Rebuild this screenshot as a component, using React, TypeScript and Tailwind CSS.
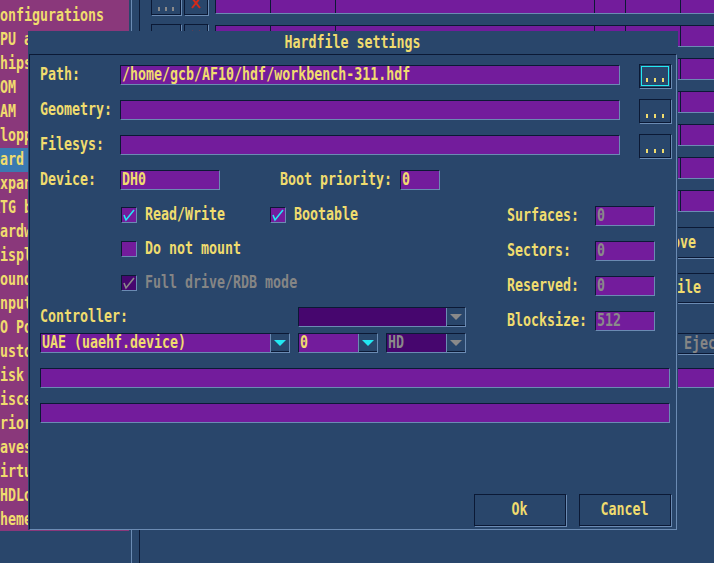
import type { ReactNode } from "react";

const sidebarItems = [
  "Configurations",
  "CPU and FPU",
  "Chipset",
  "ROM",
  "RAM",
  "Floppy drives",
  "Hard drives/CD",
  "Expansions",
  "RTG board",
  "Hardware info",
  "Display",
  "Sound",
  "Input",
  "IO Ports",
  "Custom controls",
  "Disk swapper",
  "Miscellaneous",
  "Priority",
  "Savestates",
  "Virtual Keyboard",
  "WHDLoad",
  "Themes",
];

// inset field: dark top/left, light bottom/right
const inset =
  "border border-t-[#0b1935] border-l-[#0b1935] border-r-[#6b8bb3] border-b-[#6b8bb3]";
const raised = "border border-[#0b1935] shadow-[1px_1px_0_#6b8bb3]";

function T({
  children,
  className = "",
  center = false,
}: {
  children: ReactNode;
  className?: string;
  center?: boolean;
}) {
  return (
    <span
      className={`inline-block whitespace-nowrap text-[17.5px] leading-none font-bold scale-x-[0.76] ${
        center ? "origin-center" : "origin-left"
      } ${className}`}
    >
      {children}
    </span>
  );
}

function Field({
  w,
  value,
  gray = false,
}: {
  w: string;
  value?: string;
  gray?: boolean;
}) {
  return (
    <div className={`${w} h-[20px] ${inset} flex items-center overflow-hidden bg-[#731c9c] pl-px`}>
      {value && <T className={gray ? "text-[#8a8a8a]" : "text-[#f0dc6e]"}>{value}</T>}
    </div>
  );
}

function Arrow({ gray = false }: { gray?: boolean }) {
  return (
    <div className="flex h-full w-[19px] items-center justify-center border-l border-[#6b8bb3] bg-[#29466b] shadow-[inset_0_-1px_0_#0b1935]">
      <svg width="12" height="6" viewBox="0 0 12 6">
        <polygon points="0,0 12,0 6,6" fill={gray ? "#8a8a8a" : "#22e8f2"} />
      </svg>
    </div>
  );
}

function Dropdown({
  w,
  value,
  disabled = false,
}: {
  w: string;
  value?: string;
  disabled?: boolean;
}) {
  return (
    <div className={`${w} h-[20px] ${inset} flex`}>
      <div
        className={`flex flex-1 items-center overflow-hidden pl-px ${
          disabled ? "bg-[#46066e]" : "bg-[#731c9c]"
        }`}
      >
        {value && (
          <T className={disabled ? "text-[#8a8a8a]" : "text-[#f0dc6e]"}>{value}</T>
        )}
      </div>
      <Arrow gray={disabled} />
    </div>
  );
}

function Check({
  label,
  checked = false,
  disabled = false,
  w = "",
}: {
  label: string;
  checked?: boolean;
  disabled?: boolean;
  w?: string;
}) {
  return (
    <div className={`flex h-[16px] items-center ${w}`}>
      <div
        className={`h-[16px] w-[16px] shrink-0 ${inset} ${
          disabled ? "bg-[#46066e]" : "bg-[#731c9c]"
        }`}
      >
        {checked && (
          <svg width="14" height="14" viewBox="0 0 14 14">
            <polyline
              points="2,7 4,12 12,2"
              fill="none"
              stroke={disabled ? "#8a8a8a" : "#22e8f2"}
              strokeWidth="1.6"
            />
          </svg>
        )}
      </div>
      <div className="ml-[8px] w-0">
        <T className={disabled ? "text-[#858585]" : "text-[#f0dc6e]"}>{label}</T>
      </div>
    </div>
  );
}

function DotsButton({ focused = false }: { focused?: boolean }) {
  return (
    <div className={`h-[24px] w-[32px] ${raised} bg-[#29466b] p-px`}>
      <div
        className={`flex h-full w-full items-end justify-center gap-[6px] pb-[3px] ${
          focused ? "border border-[#22e8f2]" : ""
        }`}
      >
        <span className="h-[4px] w-[2px] bg-[#f0dc6e]" />
        <span className="h-[4px] w-[2px] bg-[#f0dc6e]" />
        <span className="h-[4px] w-[2px] bg-[#f0dc6e]" />
      </div>
    </div>
  );
}

function Label({ w, text }: { w: string; text: string }) {
  return (
    <div className={`${w} flex h-[20px] items-center`}>
      <T className="text-[#f0dc6e]">{text}</T>
    </div>
  );
}

function Button({ text }: { text: string }) {
  return (
    <div className={`flex h-[32px] w-[92px] items-center justify-center ${raised} bg-[#29466b]`}>
      <T center className="text-[#f0dc6e]">
        {text}
      </T>
    </div>
  );
}

function ListRow() {
  return (
    <div className="flex h-[24px] shrink-0 items-start">
      <div className={`flex h-[24px] w-[30px] shrink-0 items-end justify-center gap-[5px] pb-[3px] ${raised} bg-[#29466b]`}>
        <span className="h-[4px] w-[2px] bg-[#8a8a8a]" />
        <span className="h-[4px] w-[2px] bg-[#8a8a8a]" />
        <span className="h-[4px] w-[2px] bg-[#8a8a8a]" />
      </div>
      <div className={`ml-[3px] flex h-[24px] w-[24px] shrink-0 items-center justify-center ${raised} bg-[#29466b]`}>
        <svg width="12" height="14" viewBox="0 0 12 14">
          <path d="M2 2 L10 12 M10 2 L2 12" stroke="#d42a1a" strokeWidth="2" />
        </svg>
      </div>
      <div className={`ml-[7px] mt-px flex h-[22px] shrink-0 ${inset} bg-[#731c9c]`}>
        <div className="w-[55px] border-r border-[#0b1935]" />
        <div className="w-[65px] border-r border-[#0b1935]" />
        <div className="w-[259px] border-r border-[#0b1935]" />
        <div className="w-[31px] border-r border-[#0b1935]" />
        <div className="w-[55px] border-r border-[#0b1935]" />
        <div className="w-[80px]" />
      </div>
    </div>
  );
}

function SideButton({
  text,
  h,
  pad,
  gray = false,
}: {
  text: string;
  h: string;
  pad: string;
  gray?: boolean;
}) {
  return (
    <div className={`ml-[449px] flex ${h} w-[150px] shrink-0 items-center ${pad} ${raised} bg-[#29466b]`}>
      <T className={gray ? "text-[#858585]" : "text-[#f0dc6e]"}>{text}</T>
    </div>
  );
}

export default function App() {
  return (
    <div className="relative h-[563px] w-[714px] overflow-hidden bg-[#29466b] font-['DejaVu_Sans_Mono',monospace]">
      {/* main window behind the dialog */}
      <div className="flex h-full">
        <aside className="h-[531px] w-[129px] shrink-0 overflow-hidden bg-[#8a387b] pt-[4px]">
          {sidebarItems.map((item) => (
            <div
              key={item}
              className={`flex h-[24px] items-center ${
                item === "Hard drives/CD" ? "bg-[#3b79b1]" : ""
              }`}
            >
              <div className="-ml-[8px]">
                <T className="text-[#f0dc6e]">{item}</T>
              </div>
            </div>
          ))}
        </aside>

        <main className="ml-[2px] min-w-0 flex-1 border-l border-[#6b8bb3] pl-[7px]">
          <div className="flex h-full flex-col overflow-hidden border-l border-[#0b1935] pl-[11px]">
            <div className="-mt-[9px] flex flex-col gap-[9px]">
              <ListRow />
              <ListRow />
              <ListRow />
              <ListRow />
              <ListRow />
              <ListRow />
              <ListRow />
            </div>
            <div className="mt-[14px] flex">
              <SideButton text="Remove" h="h-[31px]" pad="pl-[47px]" />
            </div>
            <div className="mt-[15px] flex">
              <SideButton text="Add Hardfile" h="h-[30px]" pad="pl-[4px]" />
            </div>
            <div className="mt-[30px] flex">
              <SideButton text="Eject" h="h-[21px]" pad="pl-[83px]" gray />
            </div>
            <div className="mt-[14px] flex">
              <div className={`ml-[300px] h-[20px] w-[400px] shrink-0 ${inset} bg-[#731c9c]`} />
            </div>
          </div>
        </main>
      </div>

      {/* Hardfile settings dialog */}
      <div className="absolute left-[28px] top-[31px] flex h-[499px] w-[650px] flex-col bg-[#29466b]">
        <div className="flex h-[23px] items-center justify-center">
          <T center className="text-[#f0dc6e]">
            Hardfile settings
          </T>
        </div>
        <div className={`mx-px flex flex-1 flex-col ${inset} pl-[10px] pt-[9px]`}>
          <div className="flex h-[24px] items-start">
            <Label w="w-[80px] mt-px" text="Path:" />
            <div className="mt-px">
              <Field w="w-[500px]" value="/home/gcb/AF10/hdf/workbench-311.hdf" />
            </div>
            <div className="ml-[19px]">
              <DotsButton focused />
            </div>
          </div>
          <div className="mt-[11px] flex h-[24px] items-start">
            <Label w="w-[80px] mt-px" text="Geometry:" />
            <div className="mt-px">
              <Field w="w-[500px]" />
            </div>
            <div className="ml-[19px]">
              <DotsButton />
            </div>
          </div>
          <div className="mt-[11px] flex h-[24px] items-start">
            <Label w="w-[80px] mt-px" text="Filesys:" />
            <div className="mt-px">
              <Field w="w-[500px]" />
            </div>
            <div className="ml-[19px]">
              <DotsButton />
            </div>
          </div>
          <div className="mt-[11px] flex h-[24px] items-start">
            <Label w="w-[80px] mt-px" text="Device:" />
            <div className="mt-px">
              <Field w="w-[100px]" value="DH0" />
            </div>
            <Label w="w-[120px] ml-[60px] mt-px" text="Boot priority:" />
            <div className="mt-px">
              <Field w="w-[40px]" value="0" />
            </div>
          </div>

          <div className="flex">
            <div className="flex w-[467px] flex-col">
              <div className="mt-[14px] flex flex-col gap-[18px] pl-[81px]">
                <div className="flex">
                  <Check label="Read/Write" checked w="w-[149px]" />
                  <Check label="Bootable" checked />
                </div>
                <Check label="Do not mount" />
                <Check label="Full drive/RDB mode" checked disabled />
              </div>
              <div className="mt-[16px] flex">
                <Label w="w-[258px]" text="Controller:" />
                <Dropdown w="w-[168px]" disabled />
              </div>
              <div className="mt-[6px] flex gap-[8px]">
                <Dropdown w="w-[250px]" value="UAE (uaehf.device)" />
                <Dropdown w="w-[80px]" value="0" />
                <Dropdown w="w-[80px]" value="HD" disabled />
              </div>
            </div>
            <div className="mt-[13px] flex flex-col gap-[15px]">
              {[
                ["Surfaces:", "0"],
                ["Sectors:", "0"],
                ["Reserved:", "0"],
                ["Blocksize:", "512"],
              ].map(([l, v]) => (
                <div key={l} className="flex">
                  <Label w="w-[88px]" text={l} />
                  <Field w="w-[60px]" value={v} gray />
                </div>
              ))}
            </div>
          </div>

          <div className="mt-[15px]">
            <Field w="w-[630px]" />
          </div>
          <div className="mt-[15px]">
            <Field w="w-[630px]" />
          </div>

          <div className="mb-[3px] mr-[5px] mt-auto flex justify-end gap-[13px]">
            <Button text="Ok" />
            <Button text="Cancel" />
          </div>
        </div>
      </div>
    </div>
  );
}
